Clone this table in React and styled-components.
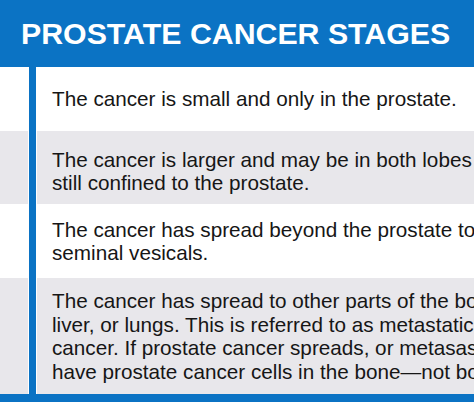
import React from 'react';
import styled, { createGlobalStyle } from 'styled-components';

const GlobalStyle = createGlobalStyle`
  html, body {
    margin: 0;
    padding: 0;
    background: #ffffff;
  }
  body {
    width: 474px;
    height: 402px;
    overflow: hidden;
  }
`;

const BLUE = '#0b73c4';
const GREY = '#e8e7eb';

const Page = styled.div`
  width: 474px;
  height: 402px;
  overflow: hidden;
  display: flex;
  flex-direction: column;
  background: #ffffff;
  font-family: 'Liberation Sans', Arial, sans-serif;
`;

const Header = styled.div`
  height: 67px;
  flex-shrink: 0;
  background: ${BLUE};
  display: flex;
  align-items: center;
  padding-left: 21px;
  padding-top: 1px;
  box-sizing: border-box;
`;

const Title = styled.h1`
  margin: 0;
  color: #ffffff;
  font-size: 30.3px;
  font-weight: 700;
  white-space: nowrap;
`;

const Table = styled.div`
  display: grid;
  grid-template-columns: 28px 7px 1fr;
  column-gap: 1px;
  background: #ffffff;
`;

// vertical blue rule running down the whole table
const Rule = styled.div`
  grid-column: 2;
  grid-row: 1 / span 4;
  background: ${BLUE};
`;

const SideCell = styled.div`
  grid-column: 1;
  height: ${({ $h }) => $h}px;
  background: ${({ $shaded }) => ($shaded ? GREY : '#ffffff')};
`;

const TextCell = styled.div`
  grid-column: 3;
  height: ${({ $h }) => $h}px;
  box-sizing: border-box;
  padding: ${({ $drop }) => $drop || 0}px 0 0 15px;
  display: flex;
  flex-direction: column;
  justify-content: center;
  background: ${({ $shaded }) => ($shaded ? GREY : '#ffffff')};
  overflow: hidden;
`;

const Line = styled.div`
  font-size: 20.7px;
  line-height: 23.5px;
  color: #161616;
  white-space: nowrap;
`;

const Footer = styled.div`
  height: 10px;
  flex-shrink: 0;
  background: ${BLUE};
`;

const stages = [
  { h: 64, shaded: false, lines: ['The cancer is small and only in the prostate.'] },
  {
    h: 73,
    shaded: true,
    drop: 7,
    lines: ['The cancer is larger and may be in both lobes but is', 'still confined to the prostate.'],
  },
  {
    h: 74,
    shaded: false,
    lines: ['The cancer has spread beyond the prostate to the', 'seminal vesicals.'],
  },
  {
    h: 116,
    shaded: true,
    lines: [
      'The cancer has spread to other parts of the body, such as the',
      'liver, or lungs. This is referred to as metastatic prostate',
      'cancer. If prostate cancer spreads, or metasasizes, you will',
      'have prostate cancer cells in the bone\u2014not bone cancer.',
    ],
  },
];

export default function App() {
  return (
    <>
      <GlobalStyle />
      <Page>
        <Header>
          <Title>PROSTATE CANCER STAGES</Title>
        </Header>
        <Table>
          <Rule />
          {stages.map((s, i) => (
            <React.Fragment key={i}>
              <SideCell $h={s.h} $shaded={s.shaded} style={{ gridRow: i + 1 }} />
              <TextCell $h={s.h} $drop={s.drop} $shaded={s.shaded} style={{ gridRow: i + 1 }}>
                {s.lines.map((l, j) => (
                  <Line key={j}>{l}</Line>
                ))}
              </TextCell>
            </React.Fragment>
          ))}
        </Table>
        <Footer />
      </Page>
    </>
  );
}
